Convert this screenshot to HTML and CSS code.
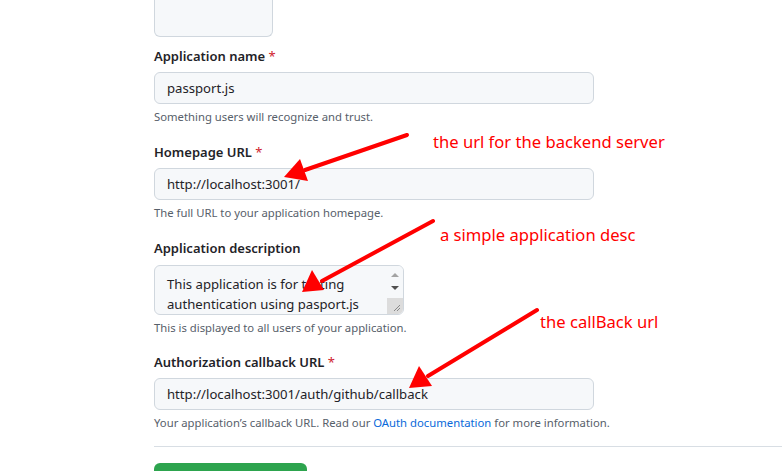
FILE: index.html
```html
<!DOCTYPE html>
<html>
<head>
<meta charset="utf-8">
<link rel="stylesheet" href="styles.css">
</head>
<body>
<div class="page">
  <form class="form">
    <div class="avatar"></div>

    <div class="group g1">
      <label class="label">Application name <span class="req">*</span></label>
      <div class="input">passport.js</div>
      <p class="note">Something users will recognize and trust.</p>
    </div>

    <div class="group g2">
      <label class="label">Homepage URL <span class="req">*</span></label>
      <div class="input">http://localhost:3001/</div>
      <p class="note">The full URL to your application homepage.</p>
    </div>

    <div class="group g2">
      <label class="label">Application description</label>
      <div class="textarea">
        <div class="ta-text">This application is for testing authentication using pasport.js</div>
        <div class="ta-scroll">
          <span class="tri up"></span>
          <span class="tri down"></span>
          <span class="thumb"><svg width="9" height="9" viewBox="0 0 9 9"><path d="M8 2 L2 8 M8 5 L5 8" stroke="#888" stroke-width="1"/></svg></span>
        </div>
      </div>
      <p class="note">This is displayed to all users of your application.</p>
    </div>

    <div class="group">
      <label class="label">Authorization callback URL <span class="req">*</span></label>
      <div class="input">http://localhost:3001/auth/github/callback</div>
      <p class="note">Your application’s callback URL. Read our <a class="link">OAuth documentation</a> for more information.</p>
    </div>

    <hr class="rule">
    <div class="btn"></div>
  </form>

  <svg class="overlay" width="782" height="471" viewBox="0 0 782 471">
    <g stroke="#ff0000" stroke-width="4" stroke-linecap="round" fill="#ff0000">
      <line x1="407" y1="135" x2="305" y2="170"/>
      <line x1="433" y1="221" x2="322" y2="281"/>
      <line x1="537" y1="310" x2="428" y2="376"/>
    </g>
    <g fill="#ff0000">
      <polygon points="284,177 300,159 308,181"/>
      <polygon points="302,292 312,270 324,290"/>
      <polygon points="409,388 419,366 432,386"/>
    </g>
  </svg>
  <div class="note-red n1">the url for the backend server</div>
  <div class="note-red n2">a simple application desc</div>
  <div class="note-red n3">the callBack url</div>
</div>
</body>
</html>
```

FILE: styles.css
```css
html, body {
  margin: 0;
  padding: 0;
  background: #ffffff;
  overflow: hidden;
}
body {
  font-family: "Noto Sans", "Open Sans", sans-serif;
  color: #1f2328;
  width: 782px;
  height: 471px;
}
.page {
  position: relative;
  width: 782px;
  height: 471px;
}
.form {
  padding-left: 154px;
  display: flex;
  flex-direction: column;
}
.avatar {
  width: 117px;
  height: 36px;
  border: 1px solid #d0d7de;
  border-top: 0;
  border-radius: 0 0 6px 6px;
  background: #f6f8fa;
}
.group {
  display: flex;
  flex-direction: column;
  margin-top: 15px;
}
.g1 {
  margin-top: 9px;
}
.g2 {
  margin-top: 16px;
}
.label {
  font-size: 13px;
  font-weight: 600;
  line-height: 20px;
  height: 20px;
  color: #1f2328;
}
.req {
  color: #cf222e;
  font-weight: 400;
}
.input {
  margin-top: 6px;
  width: 414px;
  height: 30px;
  border: 1px solid #d0d7de;
  border-radius: 6px;
  background: #f6f8fa;
  padding: 0 12px;
  font-size: 13.15px;
  line-height: 30px;
  color: #1f2328;
}
.note {
  margin: 4px 0 0;
  font-size: 11.3px;
  line-height: 18px;
  color: #57606a;
}
.link {
  color: #0969da;
}
.textarea {
  margin-top: 7px;
  width: 248px;
  height: 48px;
  border: 1px solid #d0d7de;
  border-radius: 6px;
  background: #f6f8fa;
  display: flex;
  overflow: hidden;
}
.ta-text {
  flex: 1;
  padding: 8px 0 0 12px;
  font-size: 13.15px;
  line-height: 20px;
  color: #1f2328;
  overflow: hidden;
}
.ta-scroll {
  width: 16px;
  display: flex;
  flex-direction: column;
  align-items: center;
  background: #f6f8fa;
}
.tri {
  width: 0;
  height: 0;
  border-left: 4px solid transparent;
  border-right: 4px solid transparent;
}
.tri.up {
  margin-top: 7px;
  border-bottom: 4px solid #a3a3a3;
}
.tri.down {
  margin-top: 9px;
  border-top: 4px solid #505050;
}
.thumb {
  margin-top: auto;
  width: 16px;
  height: 16px;
  background: #dcdcdc;
  display: flex;
  align-items: flex-end;
  justify-content: flex-end;
}
.thumb svg {
  display: block;
  margin: 0 2px 2px 0;
}
.rule {
  margin: 14px 0 0;
  border: 0;
  height: 1px;
  background: #d8dee4;
}
.btn {
  margin-top: 16px;
  width: 153px;
  height: 20px;
  background: #2da44e;
  border-radius: 6px 6px 0 0;
}
.overlay {
  position: absolute;
  left: 0;
  top: 0;
}
.note-red {
  position: absolute;
  color: #ff0000;
  font-family: "Noto Sans", "Open Sans", sans-serif;
  font-size: 16.6px;
  line-height: 20px;
  white-space: nowrap;
}
.n1 { left: 433px; top: 132px; }
.n2 { left: 440px; top: 225px; }
.n3 { left: 540px; top: 312px; }
```
